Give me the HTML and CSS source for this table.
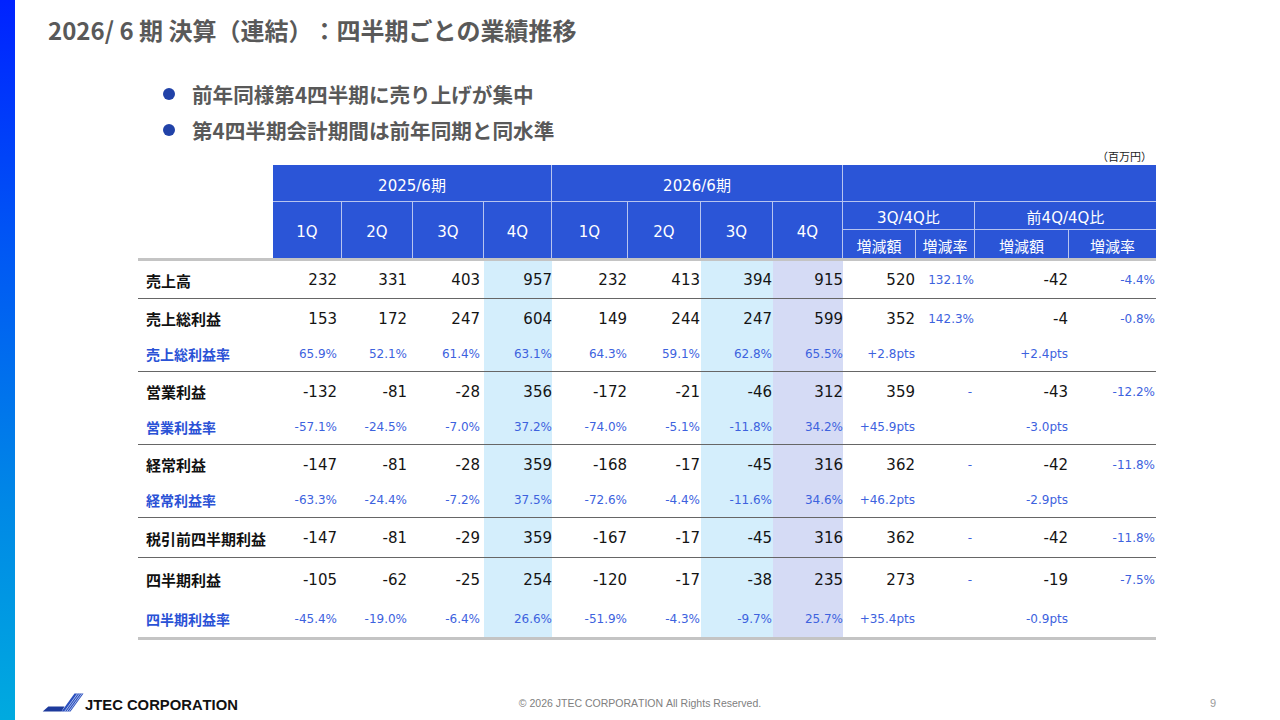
FILE: index.html
```html
<!DOCTYPE html>
<html lang="ja">
<head>
<meta charset="utf-8">
<title>2026/6期 決算（連結）：四半期ごとの業績推移</title>
<link rel="stylesheet" href="styles.css">
</head>
<body>
<div class="slide">
  <div class="side-bar"></div>
  <main class="main">
    <h1 class="title">2026/ 6 期 決算（連結）：四半期ごとの業績推移</h1>
    <ul class="points">
      <li>前年同様第4四半期に売り上げが集中</li>
      <li>第4四半期会計期間は前年同期と同水準</li>
    </ul>
    <div class="unit">（百万円）</div>

    <div class="fin" role="table">
      <!-- header -->
      <div class="blank-head"></div>
      <div class="h g4">2025/6期</div>
      <div class="h g4">2026/6期</div>
      <div class="h g4 last"></div>

      <div class="h q">1Q</div>
      <div class="h q">2Q</div>
      <div class="h q">3Q</div>
      <div class="h q">4Q</div>
      <div class="h q">1Q</div>
      <div class="h q">2Q</div>
      <div class="h q">3Q</div>
      <div class="h q">4Q</div>
      <div class="h g2">3Q/4Q比</div>
      <div class="h g2 last">前4Q/4Q比</div>
      <div class="h sub">増減額</div>
      <div class="h sub">増減率</div>
      <div class="h sub">増減額</div>
      <div class="h sub last">増減率</div>

      <div class="rule thick"></div>

      <div class="row main-row">
        <div class="lab">売上高</div>
        <div>232</div><div>331</div><div>403</div><div>957</div>
        <div>232</div><div>413</div><div>394</div><div>915</div>
        <div>520</div><div class="r">132.1%</div><div>-42</div><div class="r">-4.4%</div>
      </div>

      <div class="rule"></div>

      <div class="row main-row">
        <div class="lab">売上総利益</div>
        <div>153</div><div>172</div><div>247</div><div>604</div>
        <div>149</div><div>244</div><div>247</div><div>599</div>
        <div>352</div><div class="r">142.3%</div><div>-4</div><div class="r">-0.8%</div>
      </div>
      <div class="row rate-row">
        <div class="lab">売上総利益率</div>
        <div>65.9%</div><div>52.1%</div><div>61.4%</div><div>63.1%</div>
        <div>64.3%</div><div>59.1%</div><div>62.8%</div><div>65.5%</div>
        <div>+2.8pts</div><div></div><div>+2.4pts</div><div></div>
      </div>

      <div class="rule"></div>

      <div class="row main-row">
        <div class="lab">営業利益</div>
        <div>-132</div><div>-81</div><div>-28</div><div>356</div>
        <div>-172</div><div>-21</div><div>-46</div><div>312</div>
        <div>359</div><div class="r dash">-</div><div>-43</div><div class="r">-12.2%</div>
      </div>
      <div class="row rate-row">
        <div class="lab">営業利益率</div>
        <div>-57.1%</div><div>-24.5%</div><div>-7.0%</div><div>37.2%</div>
        <div>-74.0%</div><div>-5.1%</div><div>-11.8%</div><div>34.2%</div>
        <div>+45.9pts</div><div></div><div>-3.0pts</div><div></div>
      </div>

      <div class="rule"></div>

      <div class="row main-row">
        <div class="lab">経常利益</div>
        <div>-147</div><div>-81</div><div>-28</div><div>359</div>
        <div>-168</div><div>-17</div><div>-45</div><div>316</div>
        <div>362</div><div class="r dash">-</div><div>-42</div><div class="r">-11.8%</div>
      </div>
      <div class="row rate-row">
        <div class="lab">経常利益率</div>
        <div>-63.3%</div><div>-24.4%</div><div>-7.2%</div><div>37.5%</div>
        <div>-72.6%</div><div>-4.4%</div><div>-11.6%</div><div>34.6%</div>
        <div>+46.2pts</div><div></div><div>-2.9pts</div><div></div>
      </div>

      <div class="rule"></div>

      <div class="row main-row">
        <div class="lab">税引前四半期利益</div>
        <div>-147</div><div>-81</div><div>-29</div><div>359</div>
        <div>-167</div><div>-17</div><div>-45</div><div>316</div>
        <div>362</div><div class="r dash">-</div><div>-42</div><div class="r">-11.8%</div>
      </div>

      <div class="rule"></div>

      <div class="row main-row">
        <div class="lab">四半期利益</div>
        <div>-105</div><div>-62</div><div>-25</div><div>254</div>
        <div>-120</div><div>-17</div><div>-38</div><div>235</div>
        <div>273</div><div class="r dash">-</div><div>-19</div><div class="r">-7.5%</div>
      </div>
      <div class="row rate-row">
        <div class="lab">四半期利益率</div>
        <div>-45.4%</div><div>-19.0%</div><div>-6.4%</div><div>26.6%</div>
        <div>-51.9%</div><div>-4.3%</div><div>-9.7%</div><div>25.7%</div>
        <div>+35.4pts</div><div></div><div>-0.9pts</div><div></div>
      </div>

      <div class="rule thick"></div>
    </div>

    <footer class="foot">
      <div class="brand">
        <svg class="brand-mark" width="42" height="20" viewBox="0 0 42 20" aria-hidden="true">
          <polygon points="0.7,18.5 6.3,13.5 22.5,13.5 19.5,18.5" fill="#1d3a9c"/>
          <polygon points="19.5,18.5 28.5,18.5 41.5,0.5 32.5,0.5" fill="#2a4fbe"/>
          <line x1="22.6" y1="18.5" x2="35.6" y2="0.5" stroke="#c9d6f4" stroke-width="0.8"/>
          <line x1="24.8" y1="18.5" x2="37.8" y2="0.5" stroke="#c9d6f4" stroke-width="0.8"/>
          <line x1="27" y1="18.5" x2="40" y2="0.5" stroke="#c9d6f4" stroke-width="0.8"/>
        </svg>
        <span class="brand-name">JTEC CORPORATION</span>
      </div>
      <div class="copy">© 2026 JTEC CORPORATION All Rights Reserved.</div>
      <div class="page">9</div>
    </footer>
  </main>
</div>
</body>
</html>
```

FILE: styles.css
```css
* {
  box-sizing: border-box;
  margin: 0;
  padding: 0;
}

html, body {
  width: 1280px;
  height: 720px;
  overflow: hidden;
  background: #ffffff;
}

body {
  font-family: "Noto Sans CJK JP", "Noto Sans", sans-serif;
  color: #111111;
  font-kerning: none;
  text-spacing-trim: space-all;
}

.slide {
  display: grid;
  grid-template-columns: 15px 1fr;
  width: 1280px;
  height: 720px;
}

.side-bar {
  background: linear-gradient(to bottom, #0022ff 0%, #0058f4 35%, #0088e6 70%, #00aadf 100%);
}

.main {
  display: flex;
  flex-direction: column;
  padding-top: 15px;
  min-width: 0;
}

.title {
  margin-left: 33px;
  font-size: 24px;
  line-height: 30px;
  font-weight: 700;
  color: #595959;
}

.points {
  list-style: none;
  margin: 31px 0 0 148px;
}

.points li {
  display: flex;
  align-items: center;
  gap: 17px;
  font-size: 20.6px;
  line-height: 36px;
  font-weight: 700;
  color: #595959;
}

.points li::before {
  content: "";
  flex: none;
  width: 12px;
  height: 12px;
  border-radius: 50%;
  background: #2142a8;
}

.unit {
  margin-left: 123px;
  width: 1018px;
  text-align: right;
  padding-right: 4px;
  font-size: 11px;
  line-height: 16px;
  color: #222222;
}

/* ---------- table ---------- */
.fin {
  margin: 1px 0 0 123px;
  width: 1018px;
  display: grid;
  grid-template-columns: 135px 69px 71px 71px 68px 76px 73px 72px 70px 73px 59px 94px 87px;
  grid-template-rows:
    37px 28px 28px 3px
    37px 1px
    38px 34px 1px
    38px 34px 1px
    38px 34px 1px
    39px 1px
    42px 37px 3px;
  font-family: "DejaVu Sans", "Noto Sans CJK JP", sans-serif;
}

.blank-head {
  grid-row: span 3;
}

.h {
  display: flex;
  align-items: center;
  justify-content: center;
  padding-top: 2px;
  background: #2b55d7;
  color: #ffffff;
  font-size: 15px;
  border-right: 1px solid #b7c4f0;
}

.h.last {
  border-right: none;
}

.h.g4 {
  grid-column: span 4;
  border-bottom: 1px solid #b7c4f0;
}

.h.q {
  grid-row: span 2;
  padding-top: 4px;
}

.h.g2 {
  grid-column: span 2;
  border-bottom: 1px solid #b7c4f0;
}

.rule {
  grid-column: 1 / -1;
  background: #666666;
}

.rule.thick {
  background: #c4c4c4;
}

.row {
  display: contents;
}

.row > div {
  display: flex;
  align-items: center;
  justify-content: flex-end;
  white-space: nowrap;
}

.main-row > div {
  font-size: 15px;
  color: #141414;
  padding-top: 1px;
}

.rate-row > div {
  font-size: 12px;
  color: #3d62de;
}

.row > .r {
  font-size: 12px;
  color: #3d62de;
}

.row > .lab {
  justify-content: flex-start;
  padding-left: 8px;
  font-family: "Noto Sans CJK JP", sans-serif;
  font-weight: 700;
  font-size: 15px;
  color: #111111;
}

.rate-row > .lab {
  font-size: 14px;
  color: #2a52d6;
}

/* right padding per column */
.row > :nth-child(2) { padding-right: 5px; }
.row > :nth-child(3) { padding-right: 6px; }
.row > :nth-child(4) { padding-right: 4px; }
.row > :nth-child(5) { padding-right: 0; }
.row > :nth-child(6) { padding-right: 1px; }
.row > :nth-child(7) { padding-right: 1px; }
.row > :nth-child(8) { padding-right: 1px; }
.row > :nth-child(9) { padding-right: 0; }
.row > :nth-child(10) { padding-right: 1px; }
.row > :nth-child(11) { padding-right: 1px; }
.row > :nth-child(12) { padding-right: 1px; }
.row > :nth-child(13) { padding-right: 1px; }

.row > .dash { padding-right: 3px; }

/* highlighted quarter columns */
.row > :nth-child(5),
.row > :nth-child(8) {
  background: #d4eefc;
}

.row > :nth-child(9) {
  background: #d5dbf5;
}

/* ---------- footer ---------- */
.foot {
  margin-top: auto;
  height: 29px;
  padding: 0 15px 5px 0;
  display: grid;
  grid-template-columns: 1fr auto 1fr;
  align-items: center;
}

.brand {
  display: flex;
  align-items: center;
  gap: 1px;
  margin-left: 27px;
}

.brand-mark {
  display: block;
  flex: none;
}

.brand-name {
  font-family: "Liberation Sans", Arial, sans-serif;
  font-weight: 700;
  font-size: 14.8px;
  line-height: 20px;
  color: #111111;
  padding-top: 3px;
}

.copy {
  font-family: "Liberation Sans", Arial, sans-serif;
  font-size: 10.5px;
  color: #808080;
}

.page {
  justify-self: end;
  margin-right: 49px;
  font-family: "Liberation Sans", Arial, sans-serif;
  font-size: 11px;
  color: #9a9a9a;
}
```
